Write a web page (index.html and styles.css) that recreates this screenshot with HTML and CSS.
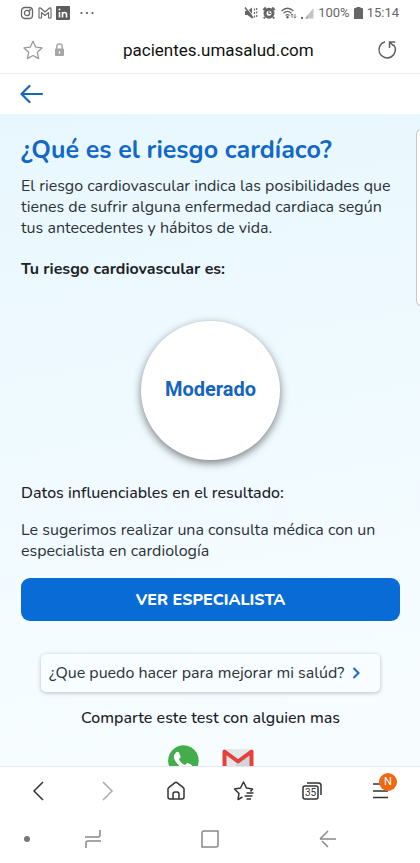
FILE: index.html
```html
<!DOCTYPE html>
<html lang="es">
<head>
<meta charset="utf-8">
<meta name="viewport" content="width=device-width, initial-scale=1">
<title>Riesgo cardíaco</title>
<link rel="stylesheet" href="styles.css">
</head>
<body>
<div class="phone">
  <div class="status">
    <div class="status-group apps">
      <svg width="14" height="14" viewBox="0 0 14 14" fill="none" stroke="#666" stroke-width="1.3"><rect x="1.5" y="1.5" width="11" height="11" rx="3.2"/><circle cx="7" cy="7" r="2.6"/><circle cx="10" cy="4" r=".4"/></svg>
      <svg width="14" height="14" viewBox="0 0 14 14" fill="none" stroke="#666" stroke-width="1.1" stroke-linejoin="round"><path d="M1 12V3q0-1.5 1.5-1L7 6l4.500-4q1.500-.5 1.500 1v9h-2.500V6.500L7 9.500l-3.500-3V12z"/></svg>
      <svg width="14" height="14" viewBox="0 0 14 14"><rect width="14" height="14" rx="1" fill="#5c5c5c"/><path d="M3.500 6v5.500M6.500 11.500V6M6.500 8.500c0-2.500 4-2.800 4 0v3" fill="none" stroke="#fff" stroke-width="1.600"/><circle cx="3.500" cy="3.500" r="1" fill="#fff"/></svg>
      <svg class="dots" width="14" height="4" viewBox="0 0 14 4" fill="#555"><circle cx="1.500" cy="2" r="1.1"/><circle cx="7" cy="2" r="1.1"/><circle cx="12.500" cy="2" r="1.1"/></svg>
    </div>
    <div class="status-group">
      <svg width="14" height="14" viewBox="0 0 14 14"><path d="M1 5h2.500L8 1.500v11L3.500 9H1z" fill="#666"/><path d="M2 1l8 10" stroke="#fff"/><path d="M1 1.500l8 10.500" stroke="#666" stroke-width="1.500"/><path d="M10.500 2.500v2M10.500 6v2M10.500 9.500v2M12.700 2v2M12.700 5.500v2M12.700 9v2" fill="none" stroke="#666" stroke-width="1.200"/></svg>
      <svg width="14" height="14" viewBox="0 0 14 14" fill="none" stroke="#666"><circle cx="7" cy="7.200" r="4" stroke-width="3"/><path d="M7 5v2.500h2" stroke-width="1.200"/><path d="M1.300 4l2.500-2.500M12.700 4l-2.500-2.500M3 11l-1.200 1.500M11 11l1.200 1.500" stroke-width="2"/></svg>
      <svg width="17" height="14" viewBox="0 0 17 14" fill="none" stroke="#666" stroke-width="1.200"><path d="M1.500 5q6-5.500 12 0M3.500 7.200q4-3.500 8 0M5.500 9.400q2-1.700 4 0"/><circle cx="7.500" cy="11.300" r=".7" fill="#666"/><path d="M12 12V8M10.800 9.300L12 8l1.200 1.300M15 8v4M13.800 10.700L15 12l1.200-1.300" stroke-width=".8"/></svg>
      <svg width="13" height="14" viewBox="0 0 13 14"><path d="M12.500 2v10.500H4z" fill="#c4c4c4"/><path d="M7 9v3.500H4z" fill="#aaa"/><rect x="0" y="11" width="2" height="2" fill="#666"/></svg>
      <span>100%</span>
      <svg class="battery" width="9" height="14" viewBox="0 0 9 14"><path d="M2.500 1h4v1H8q1 0 1 1v10H0V3q0-1 1-1h1.500z" fill="#666"/></svg>
      <time>15:14</time>
    </div>
  </div>

  <header class="address">
    <div class="address-side start">
      <button class="plain" aria-label="Favorito"><svg width="20" height="20" viewBox="0 0 20 20" fill="none" stroke="#999" stroke-width="1.300" stroke-linejoin="round"><path d="M10 1.200l2.700 5.900 6.300.8-4.700 4.300 1.300 6.400L10 15.500l-5.600 3.100 1.300-6.400L1 7.900l6.300-.8z"/></svg></button>
      <svg width="11" height="14" viewBox="0 0 11 14"><path d="M2.800 6V3.800a2.700 2.700 0 0 1 5.400 0V6" fill="none" stroke="#aaa" stroke-width="1.500"/><rect x="1" y="5.500" width="9" height="7.500" rx="1" fill="#a5a5a5"/><path d="M5.500 8v3" stroke="#eee" stroke-width="1.300"/></svg>
    </div>
    <span class="url">pacientes.umasalud.com</span>
    <div class="address-side end">
      <button class="plain" aria-label="Recargar"><svg width="20" height="20" viewBox="0 0 20 20" fill="none" stroke="#5f5f5f" stroke-width="1.500"><path d="M8 1.800a8.200 8.200 0 1 0 8.600 2.800"/><path d="M12.500 8V2h5.700M12.700 2.200L16.800 6"/></svg></button>
    </div>
  </header>

  <div class="back-bar">
    <a href="#" aria-label="Volver"><svg width="24" height="20" viewBox="0 0 24 20" fill="none" stroke="#1565bd" stroke-width="2.200" stroke-linecap="round" stroke-linejoin="round"><path d="M22 10H1.500M9.500 2L1.500 10l8 8"/></svg></a>
  </div>

  <main>
    <h1>¿Qué es el riesgo cardíaco?</h1>
    <p>El riesgo cardiovascular indica las posibilidades que tienes de sufrir alguna enfermedad cardiaca según tus antecedentes y hábitos de vida.</p>
    <h2>Tu riesgo cardiovascular es:</h2>
    <div class="result">Moderado</div>
    <h3>Datos influenciables en el resultado:</h3>
    <p>Le sugerimos realizar una consulta médica con un especialista en cardiología</p>
    <button class="primary">VER ESPECIALISTA</button>
    <a class="tip" href="#">¿Que puedo hacer para mejorar mi salúd?
      <svg width="8" height="12" viewBox="0 0 8 12" fill="none" stroke="#1769c8" stroke-width="2"><path d="M1.500 1l5 5-5 5"/></svg>
    </a>
    <h3 class="share-title">Comparte este test con alguien mas</h3>
    <div class="share">
      <a href="#" aria-label="WhatsApp"><svg width="32" height="32" viewBox="0 0 32 32"><path d="M1 31l2-8A15.300 15.300 0 1 1 9 29z" fill="#43ad4c"/><path d="M9 7.500c1-1 2.600-.8 3.100.3l1.500 3.600c.3 1.200-1.800 2.200-1.500 3.200 1.200 2.500 3 4.200 5.400 5.200 1.200.4 2-2.200 3.200-1.900l3.800 1.900c1.200 1.200-.5 4.200-3 4.800C14.500 25.500 5 15 7.200 9.800z" fill="#fff"/></svg></a>
      <a href="#" aria-label="Gmail"><svg width="32" height="32" viewBox="0 0 32 32"><rect x="2" y="4" width="28" height="23" rx="2" fill="#e4e8eb"/><path d="M16 16.500L28 7v20H9z" fill="#cfd5d9"/><path d="M2.500 27V6.500L16 16.500l13.500-10V27" fill="none" stroke="#e5403a" stroke-width="4" stroke-linejoin="round"/></svg></a>
    </div>
    <div class="edge-handle"></div>
  </main>

  <nav class="toolbar" aria-label="Navegador">
    <button class="plain" aria-label="Atrás"><svg width="24" height="24" viewBox="0 0 24 24" fill="none" stroke="#333" stroke-width="1.500"><path d="M16 3l-9 9 9 9"/></svg></button>
    <button class="plain" aria-label="Adelante"><svg width="24" height="24" viewBox="0 0 24 24" fill="none" stroke="#aaa" stroke-width="1.500"><path d="M8 3l9 9-9 9"/></svg></button>
    <button class="plain" aria-label="Inicio"><svg width="24" height="24" viewBox="0 0 24 24" fill="none" stroke="#333" stroke-width="1.500" stroke-linejoin="round"><path d="M4 10q0-1 1-1.700l5.700-4.500q1.300-1 2.600 0L19 8.300q1 .7 1 1.700v8q0 2-2 2H6q-2 0-2-2z"/><path d="M9 20v-5q0-2 2-2h2q2 0 2 2v5"/></svg></button>
    <button class="plain" aria-label="Marcadores"><svg width="24" height="24" viewBox="0 0 24 24" fill="none" stroke="#333" stroke-width="1.500" stroke-linejoin="round"><path d="M10.500 18L6 20.500 7 14.500 2.500 10l6-1L11.500 3l3 6 6 1-2 2.500M14.500 14h7M12.500 17h8M14.500 20h4.500"/></svg></button>
    <button class="plain" aria-label="Pestañas"><svg width="24" height="24" viewBox="0 0 24 24" fill="none" stroke="#333" stroke-width="1.500"><rect x="3" y="7" width="15" height="13" rx="2"/><path d="M7 4h11.500q2.500 0 2.500 2.500V16"/><text x="10.500" y="17" text-anchor="middle" class="tab-count">35</text></svg></button>
    <button class="plain menu" aria-label="Menú"><svg width="24" height="24" viewBox="0 0 24 24" fill="none" stroke="#333" stroke-width="1.500"><path d="M4 5h15M4 12h15M4 18.500h15"/></svg><span class="badge">N</span></button>
  </nav>

  <nav class="system" aria-label="Sistema">
    <svg class="dot" width="8" height="8" viewBox="0 0 8 8"><circle cx="4" cy="4" r="3" fill="#777"/></svg>
    <button class="plain" aria-label="Recientes"><svg width="20" height="20" viewBox="0 0 20 20" fill="none" stroke="#888" stroke-width="1.500"><path d="M2 8h13q2 0 2-2V1M18 12H5q-2 0-2 2v5"/></svg></button>
    <button class="plain" aria-label="Inicio del sistema"><svg width="20" height="20" viewBox="0 0 20 20" fill="none" stroke="#888" stroke-width="1.500"><path d="M2 18V4q0-2 2-2h14v14q0 2-2 2z"/></svg></button>
    <button class="plain" aria-label="Volver atrás"><svg width="20" height="20" viewBox="0 0 20 20" fill="none" stroke="#888" stroke-width="1.500"><path d="M18 10H2M10 2l-8 8M4 12l6 6"/></svg></button>
  </nav>
</div>
</body>
</html>
```
FILE: styles.css
```css
* {
  box-sizing: border-box;
}

body {
  margin: 0;
  background: #fff;
  color: #2b3238;
  font-family: Nunito, Lato, sans-serif;
  font-size: 16px;
}

svg {
  display: block;
  flex: none;
}

a {
  color: inherit;
  text-decoration: none;
}

.plain {
  padding: 0;
  border: 0;
  background: none;
}

.phone {
  display: flex;
  flex-direction: column;
  height: 100vh;
}

.status {
  display: flex;
  flex: none;
  align-items: center;
  justify-content: space-between;
  height: 26px;
  padding: 0 21px 0 20px;
  color: #666;
  font: 13px/20px Roboto, sans-serif;
}

.status-group {
  display: flex;
  align-items: center;
  gap: 4px;
}

.dots {
  margin-left: 6px;
}

.address {
  display: flex;
  flex: none;
  align-items: center;
  height: 48px;
  padding: 0 23px;
  border-bottom: 1px solid #ebebeb;
}

.address-side {
  display: flex;
  align-items: center;
  gap: 11px;
}

.start {
  flex: 6;
}

.end {
  flex: 5;
  justify-content: flex-end;
}

.url {
  color: #111;
  font: 17px/24px Roboto, sans-serif;
}

.back-bar {
  display: flex;
  flex: none;
  align-items: center;
  height: 40px;
  padding: 0 20px;
}

main {
  position: relative;
  display: flex;
  flex: 1;
  flex-direction: column;
  min-height: 0;
  overflow: hidden;
  padding: 20px 20px 0 21px;
  background: linear-gradient(170deg, #e8f7fe, #effaff 45%, #f5fcff 75%, #f7fdff);
}

main > * {
  flex: none;
}

h1,
h2,
h3,
p {
  margin: 0;
}

h1 {
  margin-bottom: 10px;
  color: #1268c8;
  font-size: 25px;
  font-weight: 700;
  line-height: 32px;
}

p {
  font-size: 16px;
  line-height: 21px;
}

h2,
h3 {
  color: #1d2226;
  font-size: 16px;
  line-height: 21px;
}

h2 {
  margin: 20px 0 41px;
  font-weight: 700;
}

h3 {
  margin-bottom: 16px;
  font-weight: 500;
}

.result {
  display: flex;
  align-items: center;
  justify-content: center;
  align-self: center;
  width: 139px;
  height: 139px;
  margin-bottom: 23px;
  padding-bottom: 4px;
  border-radius: 50%;
  background: #fff;
  box-shadow: 0 3px 8px rgba(0, 0, 0, .5);
  color: #1565c0;
  font: 700 20px/24px Roboto, sans-serif;
}

.primary {
  height: 43px;
  margin-top: 16px;
  padding: 0;
  border: 0;
  border-radius: 9px;
  background: #096bd6;
  color: #fff;
  font: 800 16px/22px Nunito, Lato, sans-serif;
}

.tip {
  display: flex;
  align-items: center;
  gap: 8px;
  height: 38px;
  margin: 33px 20px 16px;
  padding: 0 8px;
  border-radius: 5px;
  background: #f8fdff;
  box-shadow: 0 1px 4px rgba(0, 0, 0, .25);
  font-size: 16px;
}

.share-title {
  text-align: center;
}

.share {
  display: flex;
  justify-content: center;
  gap: 23px;
}

.edge-handle {
  position: absolute;
  top: 15px;
  right: -5px;
  width: 9px;
  height: 177px;
  border: 1px solid #bfc8cc;
  border-radius: 5px;
  background: #fff;
}

.toolbar {
  display: grid;
  flex: none;
  grid-template-columns: repeat(6, 1fr);
  align-items: center;
  justify-items: center;
  height: 49px;
  padding: 0 5px;
  border-top: 1px solid #e5e9eb;
}

.tab-count {
  fill: #333;
  stroke: none;
  font: 10px Roboto, sans-serif;
}

.menu {
  position: relative;
}

.badge {
  position: absolute;
  top: -6px;
  right: -4px;
  width: 18px;
  height: 18px;
  border-radius: 50%;
  background: #ee6912;
  color: #fff;
  font: 11px/18px Roboto, sans-serif;
  text-align: center;
}

.system {
  display: grid;
  flex: none;
  grid-template-columns: 11px repeat(3, 1fr);
  align-items: center;
  justify-items: center;
  height: 48px;
  padding: 0 33px 0 23px;
}

.dot {
  justify-self: start;
}
```
